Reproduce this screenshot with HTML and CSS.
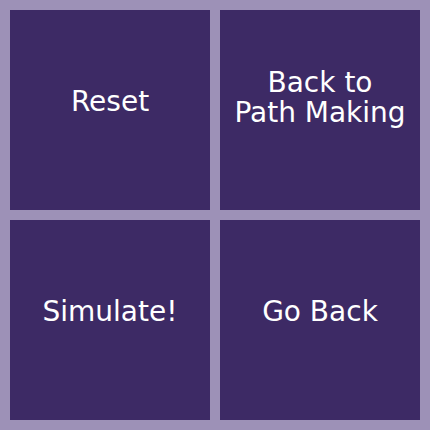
FILE: index.html
```html
<!DOCTYPE html>
<html>
<head>
<meta charset="utf-8">
<link rel="stylesheet" href="styles.css">
</head>
<body>
<div class="grid">
  <div class="tile">Reset</div>
  <div class="tile tile-two">Back to<br>Path Making</div>
  <div class="tile">Simulate!</div>
  <div class="tile">Go Back</div>
</div>
</body>
</html>
```
FILE: styles.css
```css
html, body {
  margin: 0;
  padding: 0;
  background: #9d91b7;
}
.grid {
  width: 430px;
  height: 430px;
  box-sizing: border-box;
  padding: 10px;
  display: grid;
  grid-template-columns: 200px 200px;
  grid-template-rows: 200px 200px;
  gap: 10px;
}
.tile {
  box-sizing: border-box;
  background: #3d2a65;
  color: #ffffff;
  display: flex;
  align-items: center;
  justify-content: center;
  text-align: center;
  font-family: "DejaVu Sans", sans-serif;
  font-size: 28px;
  line-height: 30px;
  padding-bottom: 16px;
}
.tile-two {
  padding-bottom: 25px;
}
```
